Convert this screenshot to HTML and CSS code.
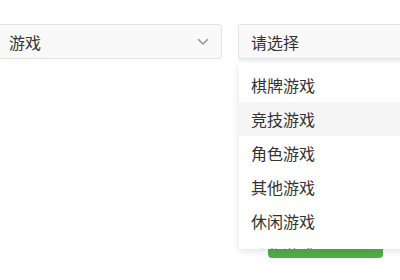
FILE: index.html
```html
<!DOCTYPE html>
<html lang="zh-CN">
<head>
    <meta charset="UTF-8">
    <title>选择游戏</title>
    <link rel="stylesheet" href="styles.css">
</head>
<body>
    <div class="row">
        <div class="select">
            <span class="value">游戏</span>
            <svg class="arrow" width="12" height="8" viewBox="0 0 12 8">
                <path d="M1.5 1.5 L6 6 L10.5 1.5" fill="none" stroke="#999" stroke-width="1.6" stroke-linecap="round" stroke-linejoin="round"/>
            </svg>
        </div>
        <div class="select open">
            <span class="placeholder">请选择</span>
            <ul class="options">
                <li>棋牌游戏</li>
                <li class="hover">竞技游戏</li>
                <li>角色游戏</li>
                <li>其他游戏</li>
                <li>休闲游戏</li>
                <li>动作游戏</li>
            </ul>
        </div>
    </div>
    <div class="actions">
        <button class="btn" aria-label="确定"></button>
    </div>
</body>
</html>
```

FILE: styles.css
```css
body {
    margin: 0;
    background: #fff;
    font-family: "Noto Sans CJK SC", "Noto Sans", sans-serif;
    color: #333;
    overflow: hidden;
}

.row {
    display: flex;
    gap: 16px;
    margin-left: -12px;
    padding-top: 24px;
}

.select {
    position: relative;
    flex: 0 0 234px;
    height: 35px;
    box-sizing: border-box;
    border: 1px solid #e3e3e3;
    border-radius: 3px;
    background: #f9f9f9;
    display: flex;
    align-items: center;
    padding: 0 12px 0 20px;
    font-size: 16px;
}

.select .value {
    flex: 1;
}

.select.open {
    padding-left: 12px;
    box-shadow: 0 2px 0 #eef3f8;
}

.options {
    position: absolute;
    top: 38px;
    left: 0;
    width: 200px;
    height: 181px;
    margin: 0;
    padding: 5px 0 0;
    list-style: none;
    background: #fff;
    border-radius: 3px;
    box-shadow: 0 2px 8px rgba(0, 0, 0, 0.12);
    overflow: hidden;
    z-index: 2;
}

.options li {
    height: 34px;
    line-height: 34px;
    padding-left: 12px;
    font-size: 16px;
}

.options li.hover {
    background: #f5f5f5;
}

.actions {
    padding: 163px 0 0 268px;
}

.btn {
    display: block;
    width: 115px;
    height: 36px;
    border: none;
    border-radius: 4px;
    background: #4fae47;
    padding: 0;
}
```
